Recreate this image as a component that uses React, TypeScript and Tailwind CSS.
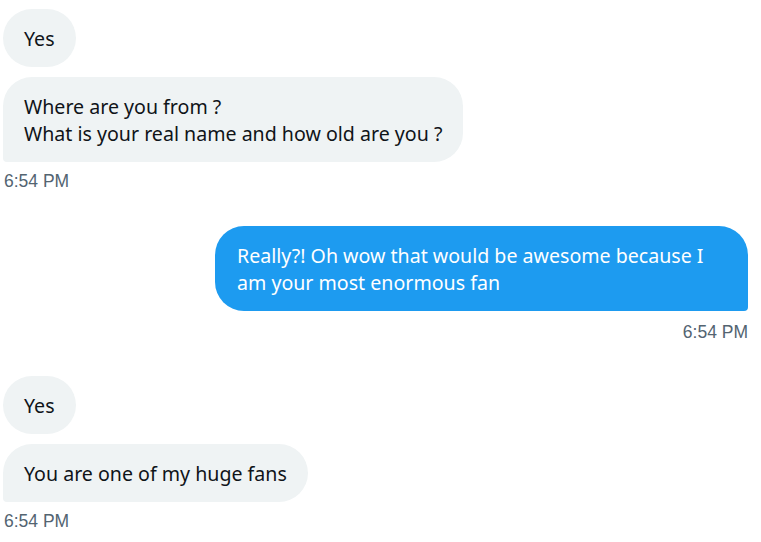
import React from "react";

const font = { fontFamily: '"Segoe UI", "Noto Sans", "Open Sans", sans-serif' };

function In({ children, last }: { children: React.ReactNode; last?: boolean }) {
  return (
    <div
      className={`self-start bg-[#eff3f4] text-[#0f1419] text-[19.6px] leading-[27px] px-[21px] py-[15.5px] rounded-[29px] ${last ? "rounded-bl-[4px]" : ""}`}
    >
      {children}
    </div>
  );
}

function Time({ right }: { right?: boolean }) {
  return (
    <div
      className={`text-[#536471] text-[17.5px] leading-[20px] ${right ? "self-end" : "self-start pl-[1px]"}`}
      style={{ fontFamily: '"Liberation Sans", Arial, sans-serif' }}
    >
      6:54 PM
    </div>
  );
}

export default function App() {
  return (
    <div className="w-[761px] h-[542px] bg-white overflow-hidden pl-[3px] pr-[13px] pt-[9px] flex flex-col" style={font}>
      <div className="flex flex-col gap-[10px]">
        <In>Yes</In>
        <In last>
          Where are you from ?
          <br />
          What is your real name and how old are you ?
        </In>
      </div>
      <div className="mt-[9px]"><Time /></div>
      <div className="mt-[35px] flex flex-col items-end">
        <div className="w-[533px] bg-[#1d9bf0] text-white text-[19.6px] leading-[27px] pl-[22px] pr-[20px] py-[15.5px] rounded-[29px] rounded-br-[4px]">
          Really?! Oh wow that would be awesome because I am your most enormous fan
        </div>
        <div className="mt-[11px]"><Time right /></div>
      </div>
      <div className="mt-[34px] flex flex-col gap-[10px]">
        <In>Yes</In>
        <In last>You are one of my huge fans</In>
      </div>
      <div className="mt-[9px]"><Time /></div>
    </div>
  );
}
